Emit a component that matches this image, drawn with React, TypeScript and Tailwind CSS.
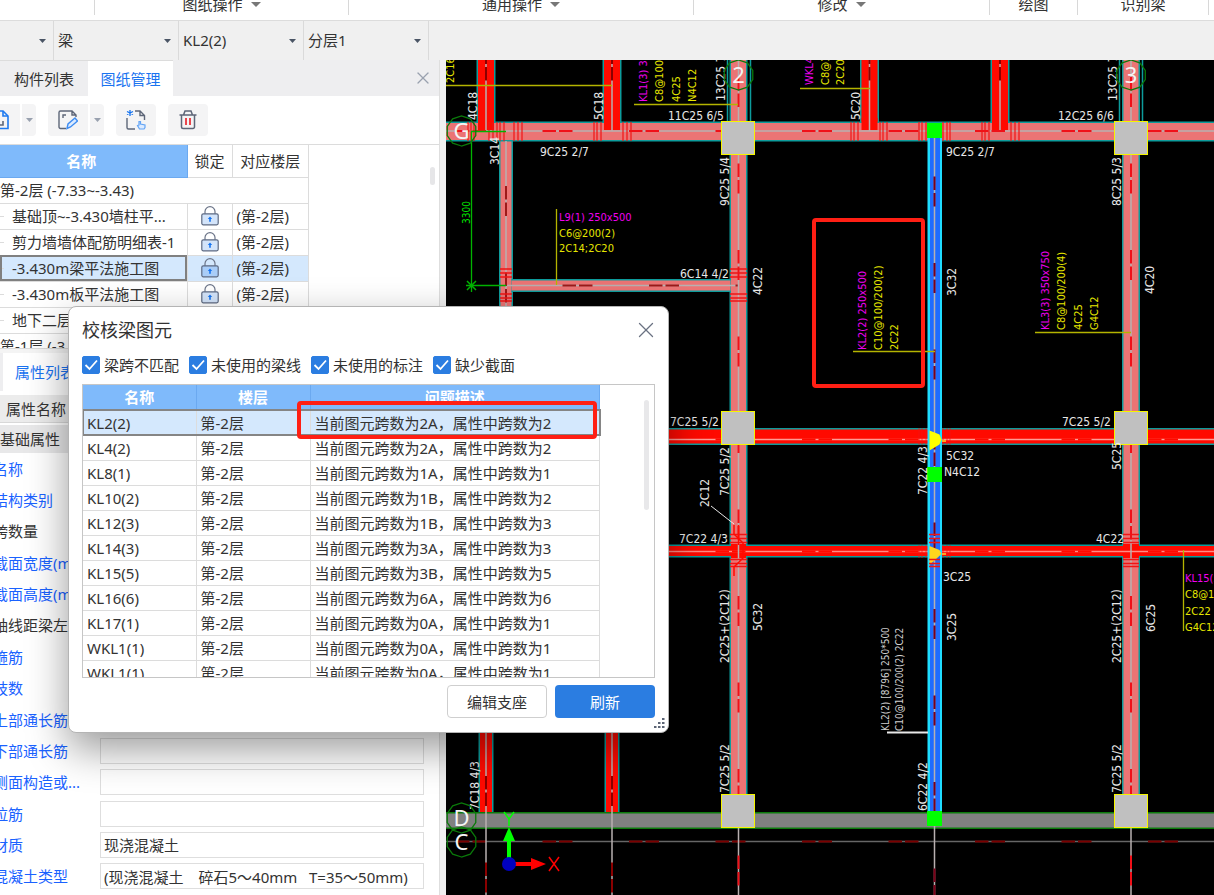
import { useState } from "react";
import type { ReactNode } from "react";
import { X } from "lucide-react";

const ribbonGroups = [
  { label: "", width: "w-[95px]", menu: false },
  { label: "图纸操作", width: "w-[254px]", menu: true },
  { label: "通用操作", width: "w-[345px]", menu: true },
  { label: "修改", width: "w-[296px]", menu: true },
  { label: "绘图", width: "w-[88px]", menu: false },
  { label: "识别梁", width: "w-[131px]", menu: false },
];

const sheets = [
  { name: "基础顶~-3.430墙柱平...", selected: false },
  { name: "剪力墙墙体配筋明细表-1", selected: false },
  { name: "-3.430m梁平法施工图", selected: true },
  { name: "-3.430m板平法施工图", selected: false },
  { name: "地下二层墙柱平法", selected: false },
];

const properties = [
  { label: "名称", value: "KL2(2)" },
  { label: "结构类别", value: "楼层框架梁" },
  { label: "跨数量", value: "2", plain: true },
  { label: "截面宽度(mm)", value: "250" },
  { label: "截面高度(mm)", value: "500" },
  { label: "轴线距梁左边...", value: "(125)", plain: true },
  { label: "箍筋", value: "C10@100/200(2)" },
  { label: "肢数", value: "2" },
  { label: "上部通长筋", value: "2C22" },
  { label: "下部通长筋", value: "" },
  { label: "侧面构造或...", value: "" },
  { label: "拉筋", value: "" },
  { label: "材质", value: "现浇混凝土" },
  { label: "混凝土类型", value: "(现浇混凝土　碎石5～40mm   T=35～50mm)" },
];

const checks = ["梁跨不匹配", "未使用的梁线", "未使用的标注", "缺少截面"];

const issues = [
  ["KL2(2)", "2A", "2"],
  ["KL4(2)", "2A", "2"],
  ["KL8(1)", "1A", "1"],
  ["KL10(2)", "1B", "2"],
  ["KL12(3)", "1B", "3"],
  ["KL14(3)", "3A", "3"],
  ["KL15(5)", "3B", "5"],
  ["KL16(6)", "6A", "6"],
  ["KL17(1)", "0A", "1"],
  ["WKL1(1)", "0A", "1"],
  ["WKL1(1)", "0A", "1"],
];

function Caret({ className = "text-gray-600" }: { className?: string }) {
  return (
    <svg width="7" height="4" viewBox="0 0 7 4" className={`shrink-0 ${className}`} aria-hidden="true">
      <path d="M0 0h7L3.5 4z" fill="currentColor" />
    </svg>
  );
}

function Ribbon() {
  return (
    <div className="flex h-[21px] shrink-0 overflow-hidden border-b border-[#dcdcdc] bg-white">
      {ribbonGroups.map((g, i) => (
        <div key={i} className={`flex h-[15px] shrink-0 items-end justify-center border-r border-[#d8d8d8] ${g.width}`}>
          {g.label && (
            <button className="flex h-[22px] items-center gap-2 leading-[22px]">
              {g.label}
              {g.menu && (
                <svg width="10" height="5" viewBox="0 0 10 5" aria-hidden="true">
                  <path d="M0 0h10L5 5z" fill="#777" />
                </svg>
              )}
            </button>
          )}
        </div>
      ))}
    </div>
  );
}

function BarSelect({ label, value, width }: { label: string; value: string; width: string }) {
  return (
    <div className={`relative flex h-full items-center border-r border-[#dadada] ${width}`}>
      <select aria-label={label} className="h-full w-full appearance-none bg-transparent pb-0.5 pl-1 outline-none">
        <option>{value}</option>
      </select>
      <span className="pointer-events-none absolute right-[7px]">
        <Caret />
      </span>
    </div>
  );
}

function Lock({ selected }: { selected: boolean }) {
  return (
    <svg width="18" height="20" viewBox="0 0 18 20" className="mx-auto" aria-label="锁定">
      <path d="M4 8V5.600a5 5 0 0 1 10 0V8" fill="none" stroke="#6b7488" strokeWidth="1.2" />
      <rect x=".8" y="7.8" width="16.4" height="11" rx="1.5" fill={selected ? "#a9cdf8" : "#d3e4fa"} stroke="#5e6a82" strokeWidth="1.2" />
      <path d="M9 10.5l2.2 2.4H9.8v2.8H8.2v-2.8H6.8z" fill="#1573f0" />
    </svg>
  );
}

function ToolButton({ label, menu, children }: { label: string; menu?: boolean; children: ReactNode }) {
  return (
    <div className="flex gap-0.5">
      <button aria-label={label} className={`flex h-8 w-10 items-center justify-center bg-[#f4f4f5] ${menu ? "rounded-l" : "rounded"}`}>
        {children}
      </button>
      {menu && (
        <button aria-label={`${label}选项`} className="flex h-8 w-3.5 items-center justify-center rounded-r bg-[#f4f4f5]">
          <Caret className="text-gray-400" />
        </button>
      )}
    </div>
  );
}

function SheetToolbar() {
  return (
    <div className="-ml-5 flex h-[49px] shrink-0 items-center gap-3 border-b border-[#dcdcdc] bg-white">
      <ToolButton label="添加图纸" menu>
        <svg width="20" height="20" viewBox="0 0 20 20" fill="none" stroke="#1e7af0" strokeWidth="1.6" aria-hidden="true">
          <path d="M6 1H13l5 5v12.5H2V4" />
          <path d="M13 1v5h5" />
          <path d="M7 15h6v-4" stroke="#5d6678" />
        </svg>
      </ToolButton>
      <ToolButton label="分割图纸" menu>
        <svg width="20" height="20" viewBox="0 0 20 20" fill="none" aria-hidden="true">
          <path d="M8 18.5H2.5A1.5 1.5 0 0 1 1 17V2.5A1.5 1.5 0 0 1 2.5 1H14l4 4v2M14 1v4h4M5 8V5h3" stroke="#5d6678" strokeWidth="1.4" />
          <path d="M9 18.5l1-4.500 7-6 2.500 3-7 6z" stroke="#3f8df2" strokeWidth="1.4" fill="#dcebff" />
        </svg>
      </ToolButton>
      <ToolButton label="定位图纸">
        <svg width="20" height="20" viewBox="0 0 20 20" fill="none" aria-hidden="true">
          <path d="M1 8v9.500a1.500 1.500 0 0 0 1.500 1.500H9M9 1h5l4.500 4.500V10M14 1v4.500h4.500" stroke="#5d6678" strokeWidth="1.400" />
          <path d="M4 0v6M1 1.500l6 3M7 1.500l-6 3" stroke="#1573f0" strokeWidth="1.300" />
          <path d="M13.500 19l-2-3.500 1.500-.5v-3.500h1.500V14l4.500 1v2.500L18 19z" fill="#dcebff" stroke="#63a4f5" strokeWidth="1.200" />
        </svg>
      </ToolButton>
      <ToolButton label="删除">
        <svg width="18" height="20" viewBox="0 0 18 20" fill="none" aria-hidden="true">
          <path d="M.5 5h17M4.500 5L6 1h6l1.500 4M2.500 5v12A1.500 1.500 0 0 0 4 18.500h10a1.500 1.500 0 0 0 1.500-1.500V5" stroke="#5d6678" strokeWidth="1.500" />
          <path d="M7 8v7M11 8v7" stroke="#e8343c" strokeWidth="1.800" />
        </svg>
      </ToolButton>
    </div>
  );
}

function SheetPanel() {
  return (
    <>
      <div className="flex h-9 shrink-0 items-center bg-[#eeeef0] pr-1.5">
        <button className="h-full w-[88px] border-t border-[#dcdcdc] pr-3.5 text-right">构件列表</button>
        <button className="h-full w-[85px] border-t border-[#dcdcdc] bg-white text-[#1a73f0]">图纸管理</button>
        <button aria-label="关闭" className="ml-auto">
          <X size={20} strokeWidth={1.5} className="text-gray-400" />
        </button>
      </div>
      <SheetToolbar />
      <div className="relative h-[204px] shrink-0 overflow-hidden border-b border-[#d8d8d8] bg-white">
        <table className="w-[309px] table-fixed border-collapse leading-[22px]">
          <colgroup>
            <col className="w-[187px]" />
            <col className="w-[45px]" />
            <col />
          </colgroup>
          <thead>
            <tr className="h-8">
              <th className="border border-l-0 border-t-0 border-[#6ba9f0] bg-[#7fbafb] pr-6 font-bold text-white">名称</th>
              <th className="border border-t-0 border-[#dcdcdc] font-normal">锁定</th>
              <th className="border border-t-0 border-[#dcdcdc] font-normal">对应楼层</th>
            </tr>
          </thead>
          <tbody>
            <tr className="h-[26px]">
              <td colSpan={3} className="border border-l-0 border-[#dcdcdc]">第-2层 (-7.33~-3.43)</td>
            </tr>
            {sheets.map((s) => (
              <tr key={s.name} className={`h-[26px] ${s.selected ? "bg-[#d4e8fd]" : ""}`}>
                <td className={`overflow-hidden whitespace-nowrap border border-l-0 border-[#dcdcdc] p-0 ${s.selected ? "outline-2 -outline-offset-2 outline-[#808080]" : ""}`}>
                  <span className="flex items-center gap-2">
                    <i className="h-px w-1 bg-[#dcdcdc]" />
                    {s.name}
                  </span>
                </td>
                <td className="border border-[#dcdcdc] p-0">
                  <Lock selected={s.selected} />
                </td>
                <td className="border border-[#dcdcdc] p-0 pl-1">(第-2层)</td>
              </tr>
            ))}
            <tr className="h-[26px]">
              <td colSpan={3} className="border border-l-0 border-[#dcdcdc]">第-1层 (-3.43~-0.03)</td>
            </tr>
          </tbody>
        </table>
        <span className="absolute right-1 top-[22px] h-[18px] w-[5px] rounded-full bg-[#e6e6e8]" />
      </div>
    </>
  );
}

function PropertyPanel() {
  return (
    <div className="flex min-h-0 flex-1 flex-col border-t-4 border-[#f4f4f4] bg-white">
      <div className="flex h-[38px] shrink-0 bg-[#eeeef0] pl-[3px]">
        <button className="bg-white px-3 text-[#1a73f0]">属性列表</button>
      </div>
      <div className="mt-1 flex h-7 shrink-0 items-center border-b border-[#d8d8d8] bg-[#ececec] pl-1.5">属性名称</div>
      <div className="mt-0.5 flex h-7 shrink-0 items-center bg-[#e8e8e9]">基础属性</div>
      <div className="flex min-h-0 flex-1 flex-col pb-[3px]">
        {properties.map((p) => (
          <label key={p.label} className="flex flex-1 items-center">
            <span className={`-ml-[7px] w-[107px] shrink-0 whitespace-nowrap ${p.plain ? "" : "text-[#1a62ff]"}`}>{p.label}</span>
            <input defaultValue={p.value} className="mr-[15px] h-[26px] min-w-0 flex-1 border border-[#dedede] bg-transparent px-[3px] outline-none" />
          </label>
        ))}
      </div>
    </div>
  );
}

/* ---- drawing ---- */

const CAD = "'DejaVu Sans Condensed','Liberation Sans',sans-serif";
const WHITE = "#e8e8e8";
const YELLOW = "#e6e600";
const MAGENTA = "#f000f0";
const PINK = "#eb7474";
const RED = "#ff0a00";
const TEAL = "#0d9c9c";
const PERIOD = 86.5;

// [x, y, text, color, vertical, size]
type Note = [number, number, string, string?, boolean?, number?];

const notes: Note[] = [
  [668, 120, "11C25 6/5"],
  [540, 156, "9C25 2/7"],
  [946, 156, "9C25 2/7"],
  [1058, 120, "12C25 6/6"],
  [680, 278, "6C14 4/2"],
  [670, 426, "7C25 5/2"],
  [679, 543, "7C22 4/3"],
  [1062, 426, "7C25 5/2"],
  [1096, 543, "4C22"],
  [946, 460, "5C32"],
  [944, 476, "N4C12"],
  [943, 581, "3C25"],
  [477, 120, "4C18", WHITE, true],
  [603, 120, "5C18", WHITE, true],
  [499, 165, "3C14", WHITE, true],
  [725, 101, "13C25 7/6", WHITE, true],
  [729, 206, "9C25 5/4", WHITE, true],
  [762, 295, "4C22", WHITE, true],
  [860, 120, "5C20", WHITE, true],
  [956, 296, "3C32", WHITE, true],
  [1117, 101, "13C25 7/6", WHITE, true],
  [1121, 206, "8C25 5/3", WHITE, true],
  [1154, 294, "4C20", WHITE, true],
  [729, 496, "7C25 5/2", WHITE, true],
  [709, 507, "2C12", WHITE, true],
  [927, 495, "7C22 4/3", WHITE, true],
  [1121, 470, "5C25", WHITE, true],
  [729, 663, "2C25+(2C12)", WHITE, true],
  [762, 631, "5C32", WHITE, true],
  [956, 641, "3C25", WHITE, true],
  [1121, 663, "2C25+(2C12)", WHITE, true],
  [1155, 632, "6C25", WHITE, true],
  [729, 793, "7C25 5/2", WHITE, true],
  [1121, 793, "7C25 5/2", WHITE, true],
  [927, 811, "6C22 4/2", WHITE, true],
  [479, 810, "7C18 4/3", WHITE, true],
  [889, 731, "KL2(2) [8796] 250*500", "#d0d0d0", true, 10],
  [903, 731, "C10@100/200(2) 2C22", "#d0d0d0", true, 10],
  [454, 83, "2C16", YELLOW, true],
  [647, 102, "KL1(3) 350x750", MAGENTA, true],
  [663, 102, "C8@100/200(4)", YELLOW, true],
  [680, 102, "4C25", YELLOW, true],
  [696, 102, "N4C12", YELLOW, true],
  [813, 85, "WKL4(1) 250x500", MAGENTA, true],
  [829, 85, "C8@100/200(2)", YELLOW, true],
  [844, 85, "2C20", YELLOW, true],
  [559, 221, "L9(1) 250x500", MAGENTA],
  [559, 237, "C6@200(2)", YELLOW],
  [559, 252, "2C14;2C20", YELLOW],
  [866, 350, "KL2(2) 250x500", MAGENTA, true],
  [882, 350, "C10@100/200(2)", YELLOW, true],
  [898, 350, "2C22", YELLOW, true],
  [1049, 330, "KL3(3) 350x750", MAGENTA, true],
  [1065, 330, "C8@100/200(4)", YELLOW, true],
  [1082, 330, "4C25", YELLOW, true],
  [1098, 330, "G4C12", YELLOW, true],
  [1185, 582, "KL15(5) 300x600", MAGENTA],
  [1185, 598, "C8@100/200(4)", YELLOW],
  [1185, 615, "2C22", YELLOW],
  [1185, 631, "G4C12", YELLOW],
  [470, 224, "3300", "#00e600", true, 10],
];

function Beam({ x, y, w, h, fill }: { x: number; y: number; w: number; h: number; fill: string }) {
  const across = w > h;
  return (
    <g>
      {across ? (
        <rect x={x} y={y - 1.5} width={w} height={h + 3} fill={TEAL} />
      ) : (
        <rect x={x - 1.5} y={y} width={w + 3} height={h} fill={TEAL} />
      )}
      <rect x={x} y={y} width={w} height={h} fill={fill} />
    </g>
  );
}

// centre line with the red double dash; `start` is where one double dash begins
function Axis({ at, from, to, start, dir, base = "#b8b0b0", dash = "#f01018" }: {
  at: number; from: number; to: number; start: number; dir: "h" | "v"; base?: string; dash?: string;
}) {
  const d = dir === "h" ? `M${from} ${at}H${to}` : `M${at} ${from}V${to}`;
  const shift = (((from - start) % PERIOD) + PERIOD) % PERIOD;
  return (
    <g fill="none" strokeWidth="1.500">
      <path d={d} stroke={base} />
      <path d={d} stroke={dash} strokeWidth="2" strokeDasharray="13.500 3 13.500 56.500" strokeDashoffset={shift} />
    </g>
  );
}

function Ticks({ xs, y1, y2 }: { xs: number[]; y1: number; y2: number }) {
  return <path d={xs.map((x) => `M${x} ${y1}V${y2}`).join("")} stroke="#f01414" strokeWidth="1.200" fill="none" />;
}

function CrossTicks({ x1, x2, ys }: { x1: number; x2: number; ys: number[] }) {
  return <path d={ys.map((y) => `M${x1} ${y}H${x2}`).join("")} stroke="#f01414" strokeWidth="1.300" fill="none" />;
}

function Bubble({ x, y, label }: { x: number; y: number; label: string }) {
  const pts = Array.from({ length: 10 }, (_, i) => {
    const a = (i * Math.PI) / 5 + Math.PI / 2;
    return `${x + 15 * Math.cos(a)},${y + 15 * Math.sin(a)}`;
  }).join(" ");
  return (
    <g>
      <polygon points={pts} fill="none" stroke="#0a7a0a" strokeWidth="1.300" />
      <text x={x} y={y + 8} textAnchor="middle" fontSize="22" fontFamily="'Noto Sans',sans-serif" fill="#f4f4f4">{label}</text>
    </g>
  );
}

function FloorPlan() {
  const near = [534.5, 538.5, 542.5, 559.5, 563.5, 566.5];
  return (
    <svg className="h-full w-full bg-black" role="img" aria-label="梁平法施工图">
      <g transform="translate(-446 -60)">
        {/* lower wall and axis */}
        <rect x="446" y="812" width="2000" height="17" fill="#0b7a0b" />
        <rect x="446" y="813.500" width="2000" height="14" fill="#808080" />
        <Axis dir="h" at={841.5} from={446} to={2400} start={542.5} base="#666" dash="#7a0000" />

        {/* secondary beams above axis G */}
        {[486, 612, 869.5, 1000].map((x) => (
          <Beam key={x} x={x - 8} y={60} w={16} h={64} fill={RED} />
        ))}
        <Beam x={480} y={700} w={12} h={112} fill={RED} />
        <Beam x={606} y={700} w={12} h={112} fill={RED} />

        {/* main vertical beams */}
        <path d="M727.500 60V122M750.500 60V122M1119.500 60V122M1142.500 60V122" stroke={TEAL} strokeWidth="1.500" />
        <Beam x={731} y={60} w={15} h={740} fill={PINK} />
        <Beam x={1123.500} y={60} w={15} h={740} fill={PINK} />
        <Beam x={500.500} y={141} w={11} h={200} fill={PINK} />
        <Beam x={511.500} y={280.500} w={219} h={10} fill={PINK} />

        {/* horizontal beams */}
        <Beam x={446} y={123} w={2000} h={17} fill={PINK} />
        <Beam x={640} y={429.500} w={1800} h={14} fill={RED} />
        <Beam x={640} y={546} w={1800} h={10} fill={RED} />
        <rect x="731" y="544" width="15" height="14" fill={RED} />
        <rect x="1123" y="544" width="16" height="14" fill={RED} />
        {[486, 612, 869.5, 1000].map((x) => (
          <g key={x}>
            <rect x={x - 8} y="118" width="16" height="12" fill={RED} />
            <Axis dir="v" at={x} from={60} to={131} start={50.5} dash="#8a0000" />
          </g>
        ))}
        <Axis dir="h" at={131} from={446} to={2400} start={542.5} />
        <Axis dir="h" at={285.500} from={506} to={738} start={562.5} dash="#9c1a1a" />
        <Axis dir="h" at={439.500} from={640} to={2400} start={542.5} base="#ff9c94" dash={RED} />
        <Axis dir="h" at={551.500} from={640} to={2400} start={542.5} base="#ff8c84" dash={RED} />
        <Axis dir="v" at={506} from={141} to={320} start={186} dash="#9c1a1a" />
        <Axis dir="v" at={738.500} from={60} to={895} start={163.5} />
        <Axis dir="v" at={1131} from={60} to={895} start={163.5} />
        <Axis dir="v" at={486} from={700} to={895} start={776} dash="#8a0000" />
        <Axis dir="v" at={612} from={700} to={895} start={776} dash="#8a0000" />

        <Ticks xs={[468, 471, 474, 489, 493, 497, 500, 504, 514, 518, 522, 594, 597, 601, 623, 627, 631, 851, 854, 858, 880, 883, 887, 919, 922, 926, 943, 947, 950, 982, 985, 989, 1011, 1015, 1019]} y1={122} y2={141} />
        <g opacity=".6">
          <Ticks xs={[919, 922, 926, 943, 947, 950]} y1={428} y2={445} />
          <Ticks xs={[919, 922, 926, 943, 947, 950]} y1={545} y2={558} />
        </g>
        <CrossTicks x1={500} x2={512} ys={[269, 273, 277, 294, 298, 301]} />
        <CrossTicks x1={730} x2={747} ys={[269, 273, 277, 294, 298, 301]} />
        <CrossTicks x1={730} x2={747} ys={near} />
        <CrossTicks x1={1123} x2={1139} ys={near} />
        <path d="M734 525v9l9 9v15l-9 9v9M738.500 525v20" fill="none" stroke={RED} strokeWidth="1.500" />
        <path d="M711 506l23 18" stroke={WHITE} />

        {/* selected beam */}
        <rect x="927.500" y="131" width="14.500" height="682" fill="#1fdcff" />
        <rect x="930" y="131" width="10" height="682" fill="#1e6cff" />
        <Axis dir="v" at={934.500} from={131} to={895} start={176.5} dash="#7c0018" />
        <path d="M929.500 430.500l10 4 2 5-2 5-10 6z" fill="#ffff00" />
        <path d="M929.500 546l10 4 2 4-12 11z" fill="#ffd61e" />
        <path d="M942 440h4v2h-4zM942 553h4v2h-4z" fill="#ffa61e" />
        <CrossTicks x1={929} x2={940} ys={near} />
        {[123, 467, 811].map((y) => (
          <rect key={y} x="927" y={y} width="15" height="15" fill="#00ff00" />
        ))}

        {/* columns */}
        {[721.5, 1114.5].map((x) =>
          [121.5, 411.5, 794.5].map((y) => (
            <rect key={`${x}-${y}`} x={x} y={y} width="33" height="33" fill="#c0c0c0" stroke="#f5f500" />
          ))
        )}

        {/* leaders and the 3300 dimension */}
        <g fill="none" stroke="#b4b400" strokeWidth="1.300">
          <path d="M446 85.500H612M634 104.500H738M800 88.500H870M556.500 209V285M853 351.500H935M1035 332.500H1131M1183.500 550V631" />
        </g>
        <path d="M887 732.500h41" stroke={WHITE} strokeWidth="2" />
        <g stroke="#00b400" fill="none" strokeWidth="1.300">
          <path d="M471.500 131V292M471 131.500H506M466 285.500H506" />
          <path d="M467 281l9 9M476 281l-9 9" strokeWidth="1.500" />
        </g>

        <g fontFamily={CAD}>
          {notes.map(([x, y, text, color = WHITE, vertical, size], i) => (
            <text
              key={i}
              fill={color}
              fontSize={size ?? (color === WHITE ? 12 : 11)}
              transform={vertical ? `translate(${x} ${y}) rotate(-90)` : `translate(${x} ${y})`}
            >
              {text}
            </text>
          ))}
        </g>

        <Bubble x={461.5} y={131} label="G" />
        <Bubble x={738.5} y={75} label="2" />
        <Bubble x={1131} y={75} label="3" />
        <Bubble x={461.5} y={818} label="D" />
        <Bubble x={461.5} y={842} label="C" />

        {/* coordinate triad */}
        <path d="M507 858v-17h-4l6-14 6 14h-4v17z" fill="#00ff00" />
        <path d="M515 862h16v-4l15 6-15 6v-4h-16z" fill="#ff0000" />
        <circle cx="509" cy="864" r="7" fill="#0000c0" />
        <path d="M504 812l5 7 5-7M509 819v7" stroke="#00ff00" strokeWidth="1.500" fill="none" />
        <path d="M549 857l10 14M559 857l-10 14" stroke="#ff0000" strokeWidth="1.500" />

        <rect x="814" y="220" width="109" height="166" rx="2" fill="none" stroke="#ff1f14" strokeWidth="4" />
      </g>
    </svg>
  );
}

function CheckDialog() {
  const [on, setOn] = useState<boolean[]>(checks.map(() => true));
  const toggle = (i: number) => setOn(on.map((v, n) => (n === i ? !v : v)));

  return (
    <div role="dialog" aria-label="校核梁图元" className="absolute left-[68px] top-[306px] w-[601px] rounded-lg border border-[#b4b4b4] bg-white px-[13px] pb-3.5 shadow-[0_16px_40px_rgba(0,0,0,0.4)]">
      <div className="flex h-[45px] items-center justify-between">
        <h2 className="text-[18px] leading-6">校核梁图元</h2>
        <button aria-label="关闭" className="-mr-1">
          <X size={26} strokeWidth={1.2} className="text-gray-500" />
        </button>
      </div>
      <div className="mt-0.5 flex h-[22px] items-center gap-2.5">
        {checks.map((c, i) => (
          <label key={c} className="flex items-center gap-1">
            <span className="relative flex h-[18px] w-[18px]">
              <input type="checkbox" checked={on[i]} onChange={() => toggle(i)} className="h-[18px] w-[18px] appearance-none rounded-[2px] border border-[#2b7de1] checked:bg-[#2b7de1]" />
              {on[i] && (
                <svg viewBox="0 0 18 18" className="pointer-events-none absolute inset-0" aria-hidden="true">
                  <path d="M3.500 9l4 4L15 4.500" fill="none" stroke="#fff" strokeWidth="1.800" />
                </svg>
              )}
            </span>
            {c}
          </label>
        ))}
      </div>
      <div className="relative mt-2 h-[294px] border border-[#c6c6c6]">
        <div className="h-full overflow-hidden">
          <table className="w-[517px] table-fixed border-collapse leading-[22px]">
            <colgroup>
              <col className="w-[113px]" />
              <col className="w-[114px]" />
              <col />
            </colgroup>
            <thead>
              <tr className="h-[25px] bg-[#7fbafb] text-white">
                <th className="border border-l-0 border-t-0 border-[#6ba9f0] p-0 font-bold">名称</th>
                <th className="border border-t-0 border-[#6ba9f0] p-0 font-bold">楼层</th>
                <th className="border border-t-0 border-[#6ba9f0] p-0 font-bold">问题描述</th>
              </tr>
            </thead>
            <tbody>
              {issues.map(([name, actual, expected], i) => (
                <tr key={i} className={`h-[25px] ${i === 0 ? "bg-[#d4e8fd] outline-2 -outline-offset-1 outline-[#858585]" : ""}`}>
                  <td className="border border-l-0 border-[#dcdcdc] p-0 pl-1">{name}</td>
                  <td className="border border-[#dcdcdc] p-0 pl-1">第-2层</td>
                  <td className="whitespace-nowrap border border-[#dcdcdc] p-0 pl-1">当前图元跨数为{actual}，属性中跨数为{expected}</td>
                </tr>
              ))}
            </tbody>
          </table>
        </div>
        <span className="absolute right-[5px] top-[15px] h-[110px] w-[5px] rounded-full bg-[#e8e8ea]" />
        <span className="absolute left-[214px] top-4 h-[38px] w-[300px] rounded border-4 border-[#ff1f14]" />
      </div>
      <div className="mt-[7px] flex justify-end gap-2">
        <button className="h-[33px] w-[100px] rounded border border-[#cfcfcf] bg-white">编辑支座</button>
        <button className="h-[33px] w-[100px] rounded bg-[#2b7de1] text-white">刷新</button>
      </div>
      <svg width="11" height="11" viewBox="0 0 11 11" className="absolute bottom-[3px] right-[3px]" fill="#5c6575" aria-hidden="true">
        <path d="M8 0h2.500v2H8zM4 4h2.500v2H4zM8 4h2.500v2H8zM0 8h2.500v2H0zM4 8h2.500v2H4zM8 8h2.500v2H8z" />
      </svg>
    </div>
  );
}

export default function App() {
  return (
    <div className="relative flex h-screen flex-col overflow-hidden bg-[#f0f0f0] font-['Noto_Sans','Noto_Sans_CJK_SC',sans-serif] text-[15px] leading-[22px] text-[#333]">
      <Ribbon />
      <div className="flex h-[39px] shrink-0">
        <BarSelect label="楼层" value="" width="w-[54px]" />
        <BarSelect label="构件类型" value="梁" width="w-[125px]" />
        <BarSelect label="构件" value="KL2(2)" width="w-[125px]" />
        <BarSelect label="分层" value="分层1" width="w-[125px]" />
      </div>
      <div className="flex min-h-0 flex-1">
        <aside className="mr-1.5 flex w-[440px] shrink-0 flex-col overflow-hidden border-r border-[#dedede]">
          <SheetPanel />
          <PropertyPanel />
        </aside>
        <main className="min-w-0 flex-1">
          <FloorPlan />
        </main>
      </div>
      <CheckDialog />
    </div>
  );
}
